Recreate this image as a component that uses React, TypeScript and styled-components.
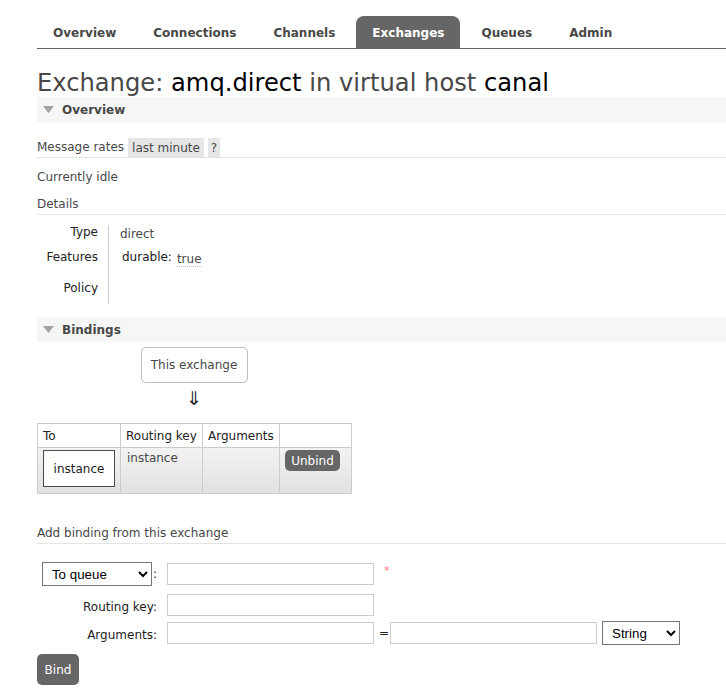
import React from 'react';
import styled, { createGlobalStyle } from 'styled-components';

const GlobalStyle = createGlobalStyle`
  html, body { margin: 0; padding: 0; background: #fff; }
  body {
    font-family: "DejaVu Sans", Verdana, sans-serif;
    font-size: 12px;
    color: #484848;
    overflow: hidden;
  }
  * { box-sizing: border-box; }
`;

const Page = styled.div`
  display: flex;
  flex-direction: column;
  padding: 16px 0 0 37px;
`;

const Menu = styled.nav`
  display: flex;
  gap: 5px;
  height: 33px;
  border-bottom: 1px solid #666;
`;

const Tab = styled.a<{ $active?: boolean }>`
  display: flex;
  align-items: center;
  padding: 1px 16px 0;
  font-weight: bold;
  text-decoration: none;
  border-radius: 8px 8px 0 0;
  color: ${(p) => (p.$active ? '#fff' : '#484848')};
  background: ${(p) => (p.$active ? '#666' : 'transparent')};
`;

const Title = styled.h1`
  margin: 20px 0 0;
  font-size: 24.2px;
  line-height: 28px;
  font-weight: normal;
  color: #484848;
  b { font-weight: normal; color: #000; }
`;

const SectionHeader = styled.div<{ $top?: number }>`
  display: flex;
  align-items: center;
  gap: 8px;
  height: 25px;
  margin-top: ${(p) => p.$top ?? 0}px;
  padding-left: 6px;
  background: #f6f6f6;
  font-weight: bold;
  color: #484848;
`;

const Triangle = () => (
  <svg width="11" height="7" viewBox="0 0 11 7">
    <polygon points="0,0 11,0 5.5,7" fill="#a3a3a3" />
  </svg>
);

const RatesRow = styled.div`
  display: flex;
  align-items: center;
  gap: 4px;
  height: 20px;
  margin-top: 16px;
  border-bottom: 1px solid #e4e4e4;
  line-height: 19px;
`;

const Pill = styled.span<{ $narrow?: boolean }>`
  display: inline-block;
  height: 19px;
  padding: 1px ${(p) => (p.$narrow ? 3 : 4)}px 0;
  background: #e6e6e6;
  color: #484848;
`;

const Line = styled.div<{ $top: number; $rule?: boolean }>`
  margin-top: ${(p) => p.$top}px;
  line-height: 14px;
  padding-bottom: ${(p) => (p.$rule ? 3 : 0)}px;
  border-bottom: ${(p) => (p.$rule ? '1px solid #e4e4e4' : 'none')};
`;

const DetailsGrid = styled.div`
  display: grid;
  grid-template-columns: 72px auto;
  grid-template-rows: 25px 25px 29px;
  margin-top: 10px;
  line-height: 14px;
`;

const DetailLabel = styled.div<{ $pad?: number }>`
  text-align: right;
  padding-right: 10px;
  padding-top: ${(p) => p.$pad ?? 0}px;
  border-right: 1px solid #ccc;
  color: #222;
`;

const DetailValue = styled.div<{ $pad?: number; $left?: number }>`
  display: flex;
  align-items: flex-start;
  gap: 5px;
  padding-left: ${(p) => p.$left ?? 11}px;
  padding-top: ${(p) => p.$pad ?? 0}px;
`;

const Key = styled.span`
  color: #222;
`;

const Dotted = styled.span`
  margin-top: 2px;
  border-bottom: 1px dotted #bbb;
  color: #484848;
`;

const Diagram = styled.div`
  display: flex;
  flex-direction: column;
  align-items: center;
  width: 314px;
`;

const ExchangeBox = styled.div`
  display: flex;
  align-items: center;
  justify-content: center;
  width: 107px;
  height: 36px;
  margin-top: 5px;
  border: 1px solid #bbb;
  border-radius: 5px;
`;

const Arrow = styled.div`
  display: flex;
  align-items: center;
  justify-content: center;
  height: 30px;
  font-size: 19px;
  color: #222;
`;

const BindTable = styled.table`
  margin-top: 10px;
  width: 314px;
  table-layout: fixed;
  border-collapse: collapse;
  th, td {
    border: 1px solid #ccc;
    padding: 0 0 0 5px;
    text-align: left;
    vertical-align: top;
    white-space: nowrap;
  }
  th {
    height: 24px;
    font-weight: normal;
    color: #222;
    vertical-align: middle;
  }
  tbody tr {
    height: 46px;
    background: linear-gradient(to bottom, #f3f3f3, #e0e0e0);
  }
  td { padding-top: 2px; line-height: 14px; }
`;

const QueueBox = styled.div`
  display: flex;
  align-items: center;
  justify-content: center;
  width: 72px;
  height: 37px;
  background: #fff;
  border: 1px solid #484848;
  color: #222;
`;

const CellText = styled.div`
  padding: 1px 0 0 1px;
`;

const DarkButton = styled.button<{ $w: number; $h: number }>`
  width: ${(p) => p.$w}px;
  height: ${(p) => p.$h}px;
  padding: 0;
  border: none;
  border-radius: 5px;
  background: #666;
  color: #fff;
  font-family: "DejaVu Sans", Verdana, sans-serif;
  font-size: 12px;
`;

const Form = styled.div`
  display: grid;
  grid-template-columns: 120px auto;
  column-gap: 10px;
  margin-top: 18px;
`;

const FormRow = styled.div<{ $top: number; $h: number }>`
  display: contents;
  & > * { margin-top: ${(p) => p.$top}px; height: ${(p) => p.$h}px; }
`;

const FormLabel = styled.label<{ $pad?: number }>`
  display: flex;
  align-items: center;
  justify-content: flex-end;
  gap: 1px;
  padding-top: ${(p) => p.$pad ?? 0}px;
  color: #222;
`;

const Fields = styled.div`
  display: flex;
  align-items: center;
  gap: 5px;
`;

const Select = styled.select<{ $w: number }>`
  width: ${(p) => p.$w}px;
  height: 24px;
  border: 1px solid #767676;
  border-radius: 0;
  background: #fff;
  color: #000;
  font-family: "Liberation Sans", Arial, sans-serif;
  font-size: 13.33px;
  padding: 0 2px 0 5px;
`;

const Input = styled.input`
  width: 207px;
  height: 22px;
  border: 1px solid #ccc;
  background: #fff;
`;

const Req = styled.span`
  margin-left: 5px;
  color: #f77;
  font-size: 11px;
  align-self: flex-start;
  margin-top: 2px;
`;

const Eq = styled.span`
  color: #222;
  width: 6px;
  text-align: center;
`;

const BindWrap = styled.div`
  margin-top: 9px;
`;

export default function App() {
  return (
    <>
      <GlobalStyle />
      <Page>
        <Menu>
          <Tab>Overview</Tab>
          <Tab>Connections</Tab>
          <Tab>Channels</Tab>
          <Tab $active>Exchanges</Tab>
          <Tab>Queues</Tab>
          <Tab>Admin</Tab>
        </Menu>

        <Title>
          Exchange: <b>amq.direct</b> in virtual host <b>canal</b>
        </Title>

        <SectionHeader>
          <Triangle />
          Overview
        </SectionHeader>

        <RatesRow>
          <span>Message rates</span>
          <Pill>last minute</Pill>
          <Pill $narrow>?</Pill>
        </RatesRow>

        <Line $top={12}>Currently idle</Line>
        <Line $top={13} $rule>Details</Line>

        <DetailsGrid>
          <DetailLabel>Type</DetailLabel>
          <DetailValue $pad={2}>direct</DetailValue>
          <DetailLabel>Features</DetailLabel>
          <DetailValue $left={13}>
            <Key>durable:</Key>
            <Dotted>true</Dotted>
          </DetailValue>
          <DetailLabel $pad={6}>Policy</DetailLabel>
          <DetailValue />
        </DetailsGrid>

        <SectionHeader $top={13}>
          <Triangle />
          Bindings
        </SectionHeader>

        <Diagram>
          <ExchangeBox>This exchange</ExchangeBox>
          <Arrow>⇓</Arrow>
        </Diagram>

        <BindTable>
          <colgroup>
            <col style={{ width: 83 }} />
            <col style={{ width: 82 }} />
            <col style={{ width: 77 }} />
            <col style={{ width: 72 }} />
          </colgroup>
          <thead>
            <tr>
              <th>To</th>
              <th>Routing key</th>
              <th>Arguments</th>
              <th></th>
            </tr>
          </thead>
          <tbody>
            <tr>
              <td>
                <QueueBox>instance</QueueBox>
              </td>
              <td>
                <CellText>instance</CellText>
              </td>
              <td></td>
              <td>
                <DarkButton $w={55} $h={21}>Unbind</DarkButton>
              </td>
            </tr>
          </tbody>
        </BindTable>

        <Line $top={32} $rule>Add binding from this exchange</Line>

        <Form>
          <FormRow $top={0} $h={24}>
            <FormLabel>
              <Select $w={110} defaultValue="queue">
                <option value="queue">To queue</option>
                <option value="exchange">To exchange</option>
              </Select>
              <span>:</span>
            </FormLabel>
            <Fields>
              <Input />
              <Req>*</Req>
            </Fields>
          </FormRow>
          <FormRow $top={8} $h={22}>
            <FormLabel $pad={3}>Routing key:</FormLabel>
            <Fields>
              <Input />
            </Fields>
          </FormRow>
          <FormRow $top={5} $h={24}>
            <FormLabel $pad={3}>Arguments:</FormLabel>
            <Fields>
              <Input />
              <Eq>=</Eq>
              <Input />
              <Select $w={78} defaultValue="string">
                <option value="string">String</option>
                <option value="number">Number</option>
                <option value="boolean">Boolean</option>
              </Select>
            </Fields>
          </FormRow>
        </Form>

        <BindWrap>
          <DarkButton $w={42} $h={31}>Bind</DarkButton>
        </BindWrap>
      </Page>
    </>
  );
}
